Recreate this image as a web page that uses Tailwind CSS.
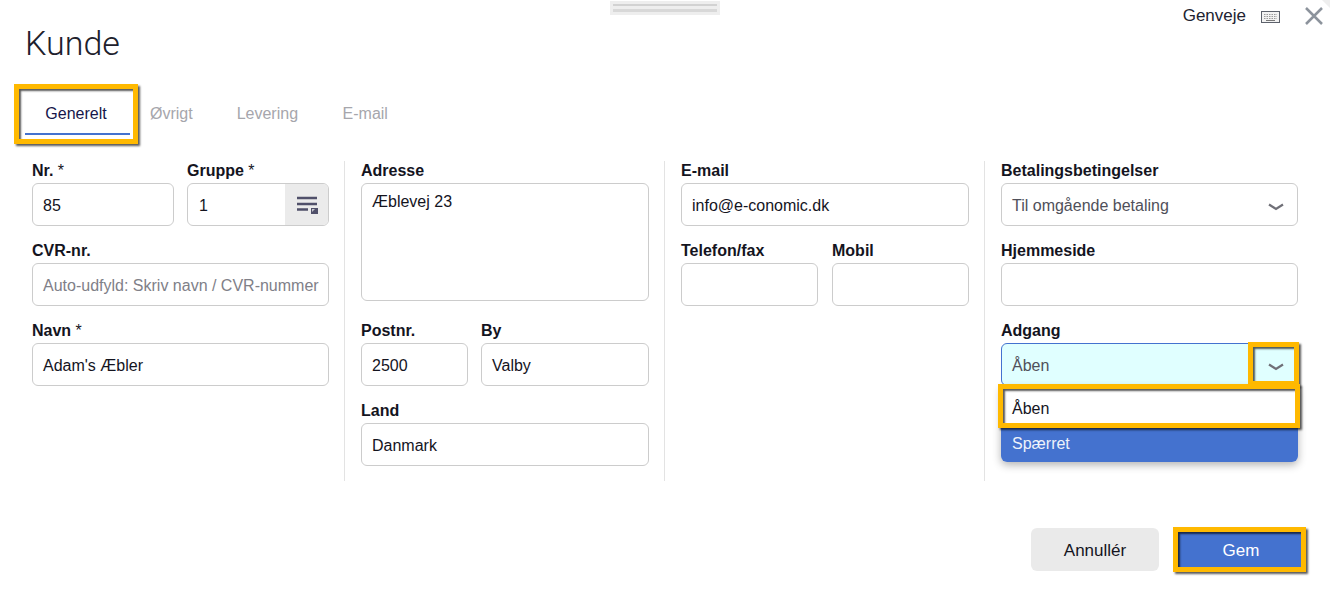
<!DOCTYPE html>
<html lang="da">
<head>
<meta charset="UTF-8">
<title>Kunde</title>
<script src="https://cdn.jsdelivr.net/npm/@tailwindcss/browser@4"></script>
</head>
<body class="bg-white text-[#14141e] font-['Liberation_Sans',Arial,sans-serif] text-base overflow-hidden">
<div class="relative w-[1330px] h-[595px] overflow-hidden">

  <!-- drag handle -->
  <div class="absolute left-[610px] top-[1px] w-[110px] h-[14px] bg-[#eeeeee] flex flex-col justify-between px-[3px] pt-[3px] pb-[3px]">
    <div class="h-[2px] bg-[#d2d2d2]"></div>
    <div class="h-[3px] bg-[#d8d8d8]"></div>
  </div>

  <!-- corner fold -->
  <div class="absolute right-0 top-0 w-[8px] h-[8px] bg-[#eeeeee] [clip-path:polygon(0_0,100%_0,100%_100%)]"></div>

  <!-- top right -->
  <div class="absolute right-[6px] top-[6px] flex items-center">
    <span class="text-[17px] leading-[20px] text-[#222230]">Genveje</span>
    <svg class="ml-[15px] mt-[2px]" width="20" height="13" viewBox="0 0 20 13">
      <rect x="0.5" y="0.5" width="18" height="11" fill="#f2f2f2" stroke="#5c616b"/>
      <path d="M3 3.5h13M3 5.5h13M3 7.5h13" stroke="#9a9a9a" stroke-dasharray="1.5 1"/>
      <path d="M5 9.5h9" stroke="#777"/>
    </svg>
    <svg class="ml-[23px]" width="20" height="20" viewBox="0 0 20 20">
      <path d="M2 2l16 16M18 2L2 18" stroke="#8c939c" stroke-width="2.5"/>
    </svg>
  </div>

  <h1 class="pl-[25px] pt-[23px] font-['Roboto',sans-serif] font-light text-[34px] leading-[40px] text-[#20202c]">Kunde</h1>

  <!-- tabs -->
  <div class="flex items-start mt-[21px] ml-[25px] h-[98px] text-[16px] text-[#a6a6ac]">
    <div class="w-[105px] h-[51px] pt-[20px] pr-[3px] text-center leading-[20px] text-[#16164a] border-b-2 border-[#4472cf]">Generelt</div>
    <div class="ml-[20px] pt-[20px] leading-[20px]">Øvrigt</div>
    <div class="ml-[44px] pt-[20px] leading-[20px]">Levering</div>
    <div class="ml-[44.5px] pt-[20px] leading-[20px]">E-mail</div>
  </div>

  <!-- form -->
  <div class="flex items-stretch pl-[32px] -mt-[21px] h-[320px]">

    <div class="w-[297px] flex flex-col gap-[15px]">
      <div class="flex gap-[13px]">
        <label class="w-[142px] block">
          <span class="block h-[20px] leading-[20px] font-bold">Nr. <span class="font-normal">*</span></span>
          <div class="mt-[2px] h-[43px] px-[10px] pt-[2px] flex items-center border border-[#cccccc] rounded-md">85</div>
        </label>
        <label class="flex-1 block">
          <span class="block h-[20px] leading-[20px] font-bold">Gruppe <span class="font-normal">*</span></span>
          <div class="mt-[2px] h-[43px] pl-[10px] flex items-center justify-between border border-[#cccccc] rounded-md overflow-hidden">
            <span class="pt-[2px] pl-[1px]">1</span>
            <span class="w-[43px] h-full bg-[#ebebeb] flex items-center justify-center">
              <svg width="22" height="18" viewBox="0 0 22 18">
                <path d="M1 2h20M1 8h20M1 13.5h11" stroke="#50506a" stroke-width="2.4"/>
                <path d="M15 12h7v6h-7z" fill="#50506a"/>
                <path d="M16 13h3l-3 3z" fill="#c4c4cc"/>
              </svg>
            </span>
          </div>
        </label>
      </div>
      <label class="block">
        <span class="block h-[20px] leading-[20px] font-bold">CVR-nr.</span>
        <div class="mt-[2px] h-[43px] px-[10px] pt-[2px] flex items-center border border-[#cccccc] rounded-md text-[#808088] whitespace-nowrap overflow-hidden">Auto-udfyld: Skriv navn / CVR-nummer</div>
      </label>
      <label class="block">
        <span class="block h-[20px] leading-[20px] font-bold">Navn <span class="font-normal">*</span></span>
        <div class="mt-[2px] h-[43px] px-[10px] pt-[2px] flex items-center border border-[#cccccc] rounded-md">Adam's Æbler</div>
      </label>
    </div>

    <div class="w-px bg-[#e3e3e3] ml-[15px] mr-[16px]"></div>

    <div class="w-[288px] flex flex-col gap-[15px]">
      <label class="block mb-[5px]">
        <span class="block h-[20px] leading-[20px] font-bold">Adresse</span>
        <div class="mt-[2px] h-[118px] px-[10px] pt-[8px] leading-[20px] border border-[#cccccc] rounded-md">Æblevej 23</div>
      </label>
      <div class="flex gap-[13px]">
        <label class="w-[107px] block">
          <span class="block h-[20px] leading-[20px] font-bold">Postnr.</span>
          <div class="mt-[2px] h-[43px] px-[10px] pt-[2px] flex items-center border border-[#cccccc] rounded-md">2500</div>
        </label>
        <label class="flex-1 block">
          <span class="block h-[20px] leading-[20px] font-bold">By</span>
          <div class="mt-[2px] h-[43px] px-[10px] pt-[2px] flex items-center border border-[#cccccc] rounded-md">Valby</div>
        </label>
      </div>
      <label class="block">
        <span class="block h-[20px] leading-[20px] font-bold">Land</span>
        <div class="mt-[2px] h-[43px] px-[10px] pt-[2px] flex items-center border border-[#cccccc] rounded-md">Danmark</div>
      </label>
    </div>

    <div class="w-px bg-[#e3e3e3] ml-[15px] mr-[16px]"></div>

    <div class="w-[288px] flex flex-col gap-[15px]">
      <label class="block">
        <span class="block h-[20px] leading-[20px] font-bold">E-mail</span>
        <div class="mt-[2px] h-[43px] px-[10px] pt-[2px] flex items-center border border-[#cccccc] rounded-md">info@e-conomic.dk</div>
      </label>
      <div class="flex gap-[14px]">
        <label class="w-[137px] block">
          <span class="block h-[20px] leading-[20px] font-bold">Telefon/fax</span>
          <div class="mt-[2px] h-[43px] border border-[#cccccc] rounded-md"></div>
        </label>
        <label class="flex-1 block">
          <span class="block h-[20px] leading-[20px] font-bold">Mobil</span>
          <div class="mt-[2px] h-[43px] border border-[#cccccc] rounded-md"></div>
        </label>
      </div>
    </div>

    <div class="w-px bg-[#e3e3e3] ml-[15px] mr-[16px]"></div>

    <div class="w-[297px] flex flex-col gap-[15px]">
      <label class="block">
        <span class="block h-[20px] leading-[20px] font-bold">Betalingsbetingelser</span>
        <div class="mt-[2px] h-[43px] px-[10px] flex items-center justify-between border border-[#cccccc] rounded-md text-[#50505a]">
          <span class="pt-[2px]">Til omgående betaling</span>
          <svg class="mr-[3px] mt-[4px]" width="16" height="8" viewBox="0 0 16 8"><path d="M1 1.5L8 6l7-4.5" fill="none" stroke="#707078" stroke-width="2.2"/></svg>
        </div>
      </label>
      <label class="block">
        <span class="block h-[20px] leading-[20px] font-bold">Hjemmeside</span>
        <div class="mt-[2px] h-[43px] border border-[#cccccc] rounded-md"></div>
      </label>
      <div class="relative">
        <span class="block h-[20px] leading-[20px] font-bold">Adgang</span>
        <div class="mt-[2px] h-[43px] px-[10px] flex items-center justify-between border border-[#4472cf] rounded-md bg-[#e0ffff] text-[#50505a]">
          <span class="pt-[2px]">Åben</span>
          <svg class="mr-[3px] mt-[4px]" width="16" height="8" viewBox="0 0 16 8"><path d="M1 1.5L8 6l7-4.5" fill="none" stroke="#707078" stroke-width="2.2"/></svg>
        </div>
        <!-- dropdown -->
        <div class="absolute left-0 right-0 top-[65px] rounded-b-md overflow-hidden shadow-[0_3px_8px_rgba(0,0,0,0.3)] z-10">
          <div class="h-[40px] px-[11px] pt-[6px] flex items-center bg-white text-[#14141e]">Åben</div>
          <div class="h-[36px] px-[11px] flex items-center bg-[#4472cf] text-[#eef2fb]">Spærret</div>
        </div>
      </div>
    </div>
  </div>

  <!-- buttons -->
  <div class="absolute right-[25px] top-[528px] flex gap-[18px] text-[17px]">
    <div class="w-[128px] h-[43px] pt-[2px] rounded-md bg-[#eaeaea] flex items-center justify-center">Annullér</div>
    <div class="w-[128px] h-[43px] pt-[2px] bg-[#4472cf] text-white flex items-center justify-center">Gem</div>
  </div>

  <!-- annotation frames -->
  <div class="absolute left-[14px] top-[84px] w-[124px] h-[60px] border-[5px] border-[#ffb900] shadow-[2px_2px_2px_rgba(0,0,0,0.65),inset_2px_2px_2px_rgba(0,0,0,0.65)] z-20"></div>
  <div class="absolute left-[1248px] top-[342px] w-[51px] h-[44px] border-[5px] border-[#ffb900] shadow-[2px_2px_2px_rgba(0,0,0,0.65),inset_2px_2px_2px_rgba(0,0,0,0.65)] z-20"></div>
  <div class="absolute left-[998px] top-[384px] w-[302px] h-[44px] border-[5px] border-[#ffb900] shadow-[2px_2px_2px_rgba(0,0,0,0.65),inset_2px_2px_2px_rgba(0,0,0,0.65)] z-20"></div>
  <div class="absolute left-[1173px] top-[527px] w-[133px] h-[45px] border-[5px] border-[#ffb900] shadow-[2px_2px_2px_rgba(0,0,0,0.65),inset_2px_2px_2px_rgba(0,0,0,0.65)] z-20"></div>
</div>
</body>
</html>
